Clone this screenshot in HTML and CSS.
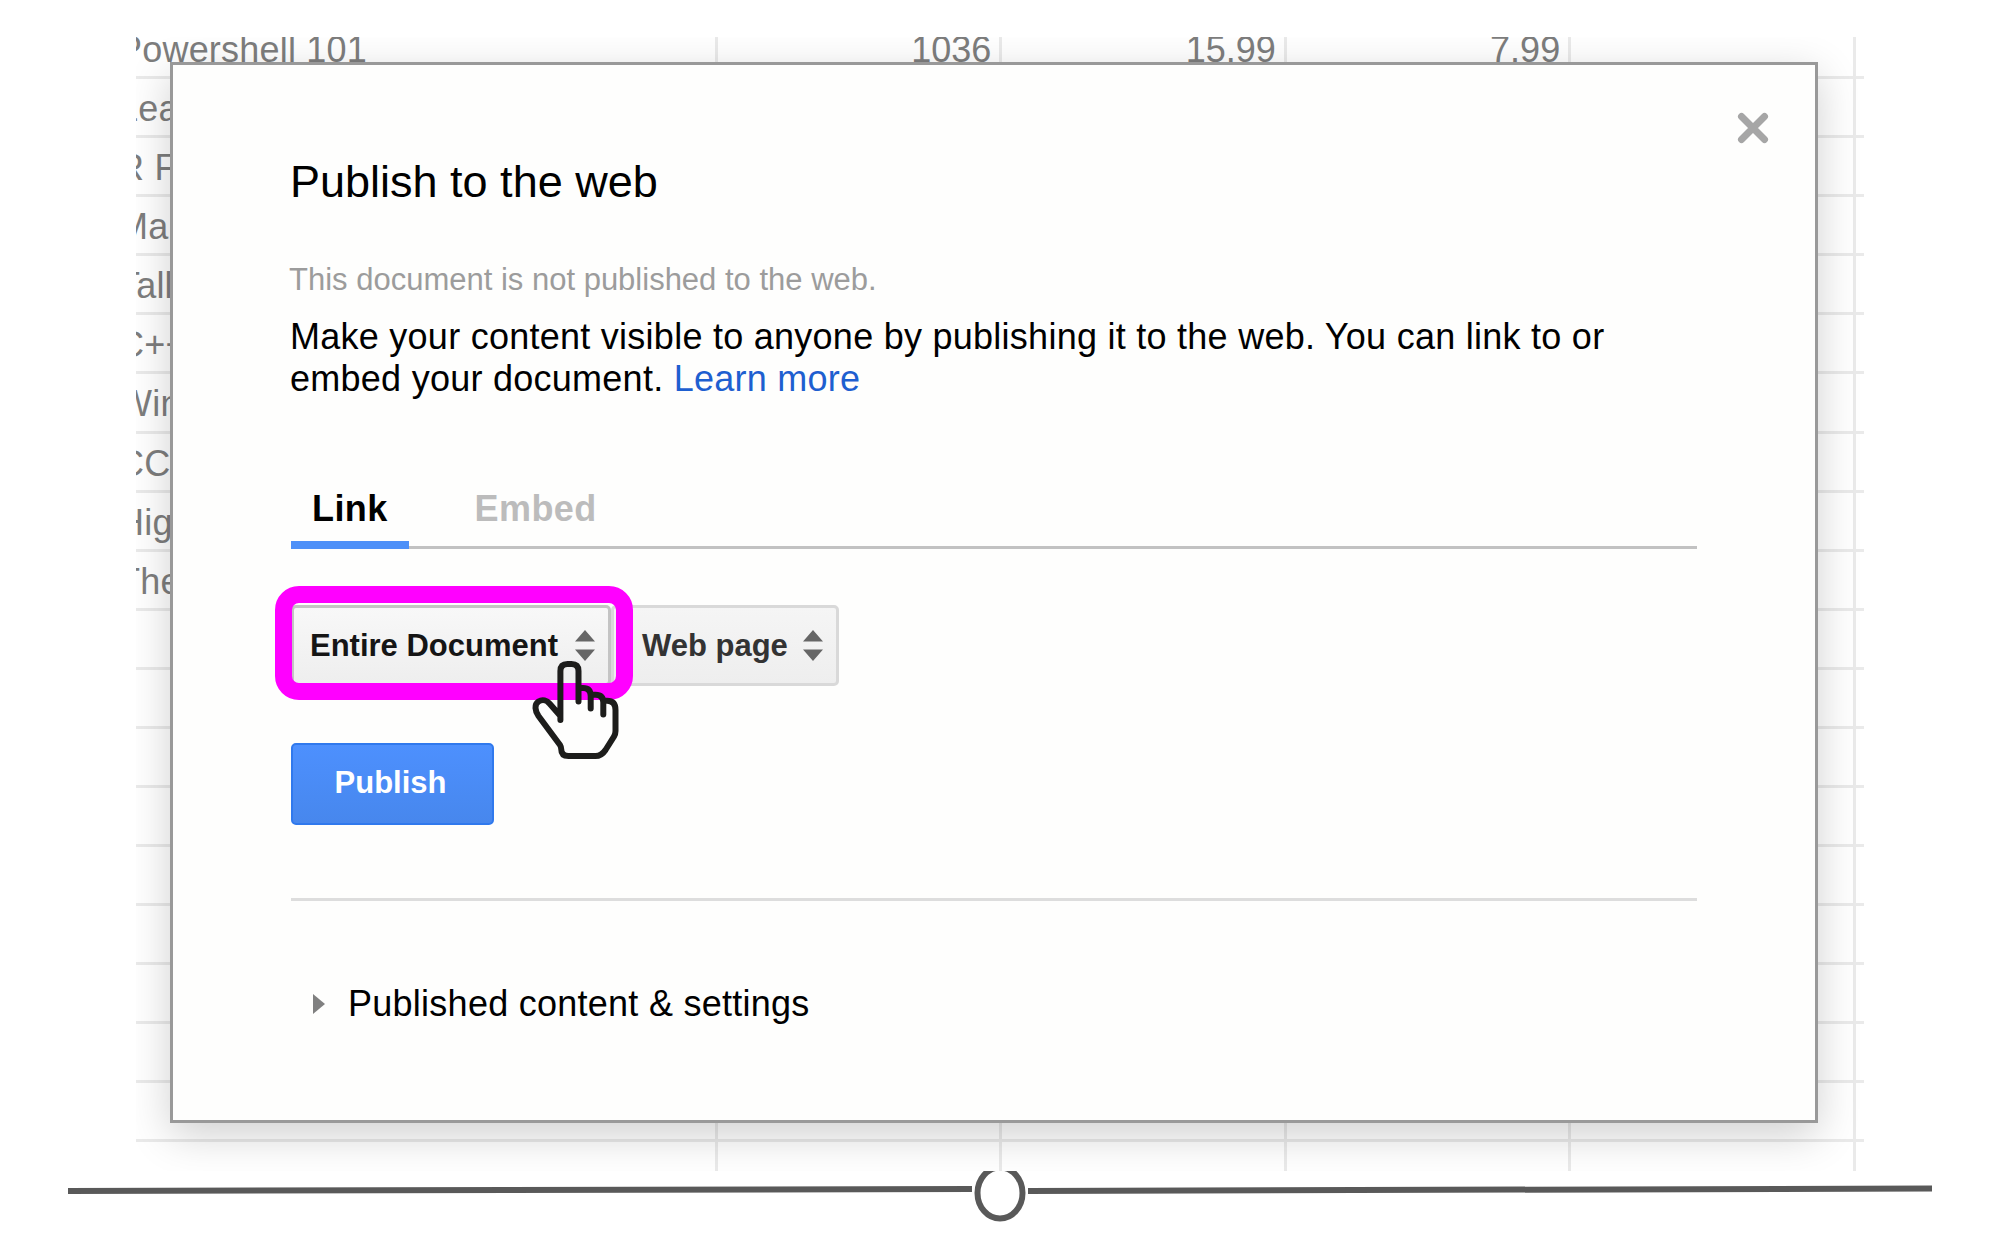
FILE: index.html
```html
<!DOCTYPE html>
<html lang="en">
<head>
<meta charset="utf-8">
<title>Publish to the web</title>
<link rel="stylesheet" href="styles.css">
</head>
<body>
<main class="sheet">
  <div class="rows">
    <div class="row"><span class="cell name">Powershell 101</span><span class="cell">1036</span><span class="cell">15.99</span><span class="cell">7.99</span><span class="cell"></span></div>
    <div class="row"><span class="cell name">Lea</span><span class="cell wide"></span></div>
    <div class="row"><span class="cell name">R F</span><span class="cell wide"></span></div>
    <div class="row"><span class="cell name">Ma</span><span class="cell wide"></span></div>
    <div class="row"><span class="cell name">Tall</span><span class="cell wide"></span></div>
    <div class="row"><span class="cell name">C++</span><span class="cell wide"></span></div>
    <div class="row"><span class="cell name">Win</span><span class="cell wide"></span></div>
    <div class="row"><span class="cell name">CC</span><span class="cell wide"></span></div>
    <div class="row"><span class="cell name">Hig</span><span class="cell wide"></span></div>
    <div class="row"><span class="cell name">The</span><span class="cell wide"></span></div>
    <div class="row"><span class="cell name"></span><span class="cell wide"></span></div>
    <div class="row"><span class="cell name"></span><span class="cell wide"></span></div>
    <div class="row"><span class="cell name"></span><span class="cell wide"></span></div>
    <div class="row"><span class="cell name"></span><span class="cell wide"></span></div>
    <div class="row"><span class="cell name"></span><span class="cell wide"></span></div>
    <div class="row"><span class="cell name"></span><span class="cell wide"></span></div>
    <div class="row"><span class="cell name"></span><span class="cell wide"></span></div>
    <div class="row"><span class="cell name"></span><span class="cell wide"></span></div>
    <div class="row"><span class="cell name"></span><span class="cell"></span><span class="cell"></span><span class="cell"></span><span class="cell"></span></div>
    <div class="row last"><span class="cell name"></span><span class="cell"></span><span class="cell"></span><span class="cell"></span><span class="cell"></span></div>
  </div>

  <section class="dialog">
    <svg class="close" viewBox="0 0 32 32"><path d="M4.500 4.500L27.500 27.500M27.500 4.500L4.500 27.500"/></svg>
    <h1 class="title">Publish to the web</h1>
    <p class="status">This document is not published to the web.</p>
    <p class="intro">Make your content visible to anyone by publishing it to the web. You can link to or<br>embed your document. <a class="learn">Learn more</a></p>

    <nav class="tabs">
      <span class="tab active">Link</span>
      <span class="tab">Embed</span>
    </nav>

    <div class="selects">
      <div class="select entire"><span>Entire Document</span>
        <svg class="arrows" viewBox="0 0 20 31"><path d="M0 11.500L10 0L20 11.500ZM0 19.500H20L10 31Z"/></svg>
        <div class="highlight"></div>
      </div>
      <div class="select format"><span>Web page</span>
        <svg class="arrows" viewBox="0 0 20 31"><path d="M0 11.500L10 0L20 11.500ZM0 19.500H20L10 31Z"/></svg>
      </div>
      <svg class="pointer" viewBox="530 658 92 104">
        <path d="M560.400 720V671Q560.400 664 567.500 664H571.500Q578.500 664 578.500 671V701.500M579 688H583Q590.700 688 590.700 696V708.500M591.500 694.700H595.500Q603.300 694.700 603.300 702.500V714.500M604 700.700H607Q615.500 700.700 615.500 710V731Q615.500 734 614 736.500L605.500 750Q601.500 756 595.500 756H568.500Q561.200 756 561.200 749Q561.200 747 560 745L538.500 716C535 711 534 704.500 538.500 701.500C542.500 699 547 700.500 549.500 703.500L560 715.500"/>
      </svg>
    </div>

    <button class="publish">Publish</button>
    <div class="settings"><svg class="triangle" viewBox="0 0 12 20"><path d="M0 0L12 10L0 20Z"/></svg><span>Published content &amp; settings</span></div>
  </section>
</main>

<footer class="rule">
  <svg class="line" viewBox="0 0 904 50"><path d="M0 20L904 18"/></svg>
  <svg class="ring" viewBox="0 0 52 52"><ellipse cx="26" cy="22" rx="22.500" ry="25.500"/></svg>
  <svg class="line" viewBox="0 0 904 50"><path d="M0 20L904 17.500"/></svg>
</footer>
</body>
</html>
```
FILE: styles.css
```css
* { box-sizing: border-box; }

body {
  margin: 0;
  width: 2000px;
  height: 1250px;
  overflow: hidden;
  background: #fff;
  color: #000;
  font-family: "Liberation Sans", Arial, sans-serif;
}

.sheet {
  position: relative;
  width: 1728px;
  height: 1171px;
  padding-top: 37px;
  margin-left: 136px;
  overflow: hidden;
  clip-path: inset(37px 0 0 0);
}

.rows {
  display: flex;
  flex-direction: column;
  margin-top: -17px;
}

.row {
  display: flex;
  flex: none;
  height: 59.09px;
  border-bottom: 3px solid #eaeaea;
}
.row.last { border-bottom: 0; }

.cell {
  flex: none;
  width: 284.4px;
  padding: 5px 8px 0 0;
  border-right: 3px solid #eaeaea;
  color: #7d7d7d;
  font-size: 36px;
  line-height: 50px;
  text-align: right;
  white-space: nowrap;
}
.cell.wide { width: 1137.600px; }
.cell.name {
  width: 600px;
  margin-left: -18px;
  padding-left: 0;
  text-align: left;
  letter-spacing: .2px;
}

.dialog {
  position: absolute;
  left: 34px;
  top: 62px;
  width: 1648px;
  height: 1061px;
  padding: 92px 118px 0 118px;
  background: #fefefd;
  border: 3px solid #999;
  box-shadow: 0 12px 40px rgba(0, 0, 0, .19);
}

.close {
  position: absolute;
  top: 47px;
  right: 46px;
  width: 32px;
  height: 32px;
}
.close path { stroke: #a6a6a6; stroke-width: 7; fill: none; stroke-linecap: round; }

.title {
  margin: 0 0 0 -1px;
  font-size: 45px;
  line-height: 50px;
  font-weight: 400;
  white-space: nowrap;
}

.status {
  margin: 53px 0 0 -2px;
  color: #9c9c9c;
  font-size: 31px;
  line-height: 40px;
}

.intro {
  margin: 16px 0 0 -1px;
  font-size: 36px;
  line-height: 42px;
  letter-spacing: .26px;
  white-space: nowrap;
}
.learn { color: #1e5fd0; }

.tabs {
  display: flex;
  gap: 45px;
  height: 67px;
  margin-top: 82px;
  border-bottom: 3px solid #c2c2c2;
}
.tab {
  height: 67px;
  padding: 0 21px;
  color: #bcbcbc;
  font-size: 36px;
  line-height: 53px;
  letter-spacing: .4px;
  font-weight: 700;
}
.tab.active { color: #000; border-bottom: 8px solid #4d90f8; }

.selects {
  position: relative;
  display: flex;
  margin-top: 56px;
}
.select {
  position: relative;
  display: flex;
  align-items: center;
  justify-content: space-between;
  height: 81px;
  border: 3px solid #d9d9d9;
  border-radius: 5px;
  background: linear-gradient(#f5f5f5, #eee);
  color: #333;
  font-size: 31px;
  font-weight: 700;
  white-space: nowrap;
}
.select.entire {
  z-index: 1;
  width: 320px;
  padding: 0 13px 0 16px;
  border-color: #c4c4c4;
  background: linear-gradient(#f8f8f8, #eee);
  color: #151515;
}
.select.format {
  width: 228px;
  padding: 0 13px 0 28px;
}
.arrows { width: 20px; height: 31px; fill: #666; }

.highlight {
  position: absolute;
  left: -19px;
  top: -22px;
  width: 358px;
  height: 114px;
  border: 17px solid #f0f;
  border-radius: 24px;
}
.pointer {
  position: absolute;
  z-index: 2;
  left: 239px;
  top: 53px;
  width: 92px;
  height: 104px;
}
.pointer path {
  fill: none;
  stroke: #1d1d1b;
  stroke-width: 6;
  stroke-linecap: round;
  stroke-linejoin: round;
}

.publish {
  display: block;
  width: 203px;
  height: 82px;
  margin-top: 57px;
  padding: 0 4px 2px 0;
  border: 2px solid #3079ed;
  border-radius: 5px;
  background: linear-gradient(#4d90fe, #4787ed);
  color: #fff;
  font: 700 31px "Liberation Sans", Arial, sans-serif;
}

.settings {
  display: flex;
  align-items: center;
  gap: 23px;
  margin-top: 73px;
  padding: 81px 0 0 22px;
  border-top: 3px solid #ddd;
  font-size: 36px;
  line-height: 44px;
  letter-spacing: .26px;
  white-space: nowrap;
}
.triangle { width: 12px; height: 20px; fill: #808080; }

.rule {
  display: flex;
  justify-content: center;
  gap: 2px;
}
.line { width: 904px; height: 50px; }
.line path { stroke: #595959; stroke-width: 6; }
.ring { width: 52px; height: 52px; overflow: hidden; }
.ring ellipse { fill: none; stroke: #595959; stroke-width: 6; }
```
